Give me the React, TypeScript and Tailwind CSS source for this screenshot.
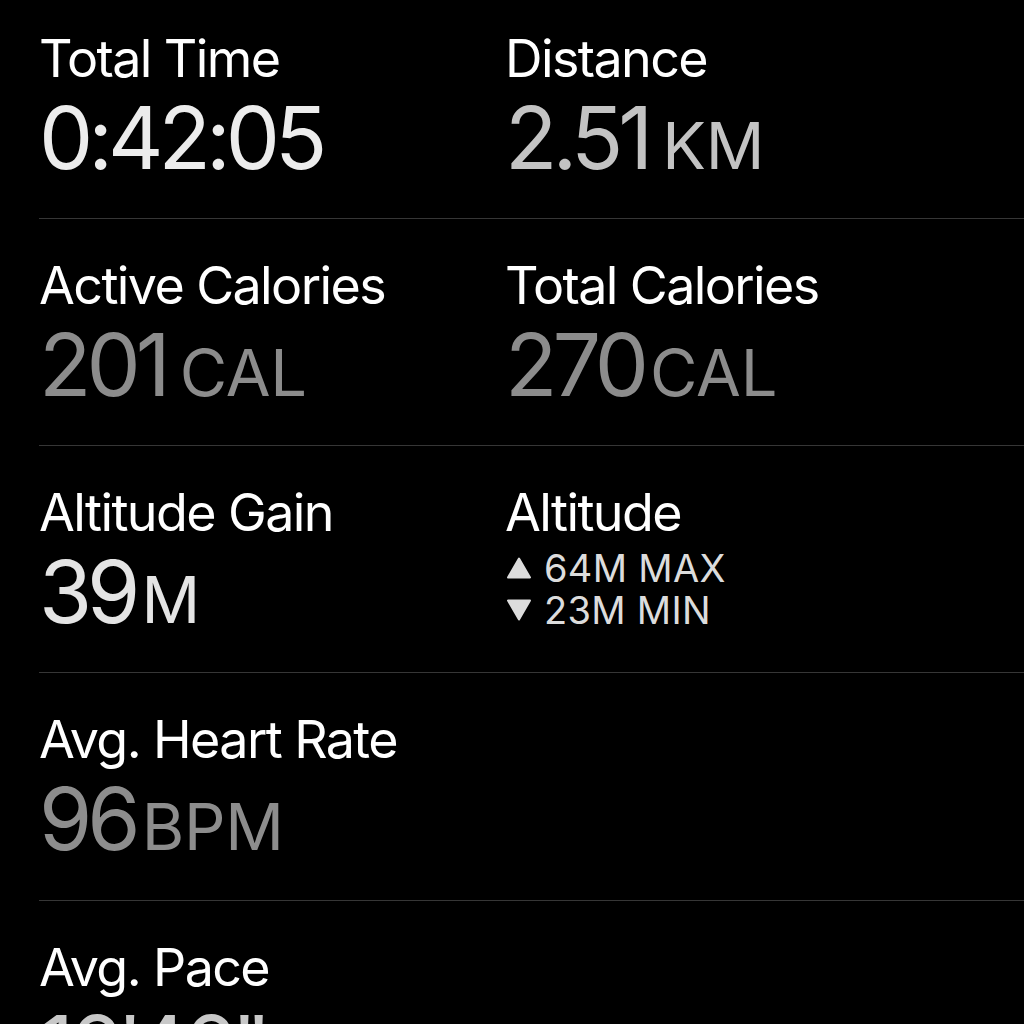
import React from "react";

const font = { fontFamily: "Inter, 'Noto Sans', sans-serif" };

function Label({ children }: { children: React.ReactNode }) {
  return (
    <div className="text-[52px] leading-[62px] text-white tracking-[-1.6px] whitespace-nowrap">
      {children}
    </div>
  );
}

function Value({
  num,
  unit,
  color,
  wide,
}: {
  num: string;
  unit?: string;
  color: string;
  wide?: boolean;
}) {
  return (
    <div className={`mt-[5px] h-[86px] leading-[86px] whitespace-nowrap ${color}`}>
      <span className="text-[86px] tracking-[-5px]">{num}</span>
      {unit && (
        <span className={`${wide ? "ml-[14px]" : "ml-[6px]"} text-[65px] tracking-[-0.2px]`}>{unit}</span>
      )}
    </div>
  );
}

function Tri({ up }: { up: boolean }) {
  return (
    <svg width="24" height="22" viewBox="0 0 24 22" className="shrink-0">
      {up ? (
        <path d="M12 1.5 L23 20.5 L1 20.5 Z" fill="#dcdcdc" stroke="#dcdcdc" strokeWidth="2" strokeLinejoin="round" />
      ) : (
        <path d="M1 1.5 L23 1.5 L12 20.5 Z" fill="#dcdcdc" stroke="#dcdcdc" strokeWidth="2" strokeLinejoin="round" />
      )}
    </svg>
  );
}

export default function App() {
  return (
    <div className="w-[1024px] h-[1024px] overflow-hidden bg-black" style={font}>
      <div className="pl-[39px]">
        {/* Row 1 */}
        <div className="grid grid-cols-[466px_1fr] h-[219px] pt-[28px] border-b border-[#363636]">
          <div>
            <Label>Total Time</Label>
            <Value num="0:42:05" color="text-[#ececec]" />
          </div>
          <div>
            <Label>Distance</Label>
            <Value num="2.51" unit="KM" color="text-[#c3c3c3]" wide />
          </div>
        </div>
        {/* Row 2 */}
        <div className="grid grid-cols-[466px_1fr] h-[227px] pt-[36px] border-b border-[#363636]">
          <div>
            <Label>Active Calories</Label>
            <Value num="201" unit="CAL" color="text-[#8c8c8c]" wide />
          </div>
          <div>
            <Label>Total Calories</Label>
            <Value num="270" unit="CAL" color="text-[#8c8c8c]" />
          </div>
        </div>
        {/* Row 3 */}
        <div className="grid grid-cols-[466px_1fr] h-[227px] pt-[36px] border-b border-[#363636]">
          <div>
            <Label>Altitude Gain</Label>
            <Value num="39" unit="M" color="text-[#e4e4e4]" />
          </div>
          <div>
            <Label>Altitude</Label>
            <div className="mt-[3px] text-[38px] leading-[42px] text-[#dcdcdc] tracking-[0.3px]">
              <div className="flex items-center gap-[13px] pl-[2px]">
                <Tri up />
                <span>64M MAX</span>
              </div>
              <div className="flex items-center gap-[13px] pl-[2px]">
                <Tri up={false} />
                <span>23M MIN</span>
              </div>
            </div>
          </div>
        </div>
        {/* Row 4 */}
        <div className="grid grid-cols-[466px_1fr] h-[228px] pt-[36px] border-b border-[#363636]">
          <div>
            <Label>Avg. Heart Rate</Label>
            <Value num="96" unit="BPM" color="text-[#8d8d8d]" />
          </div>
          <div />
        </div>
        {/* Row 5 */}
        <div className="grid grid-cols-[466px_1fr] h-[227px] pt-[36px]">
          <div>
            <Label>Avg. Pace</Label>
            <Value num={"16'46\""} unit="/KM" color="text-[#c8c8c8]" />
          </div>
          <div />
        </div>
      </div>
    </div>
  );
}
